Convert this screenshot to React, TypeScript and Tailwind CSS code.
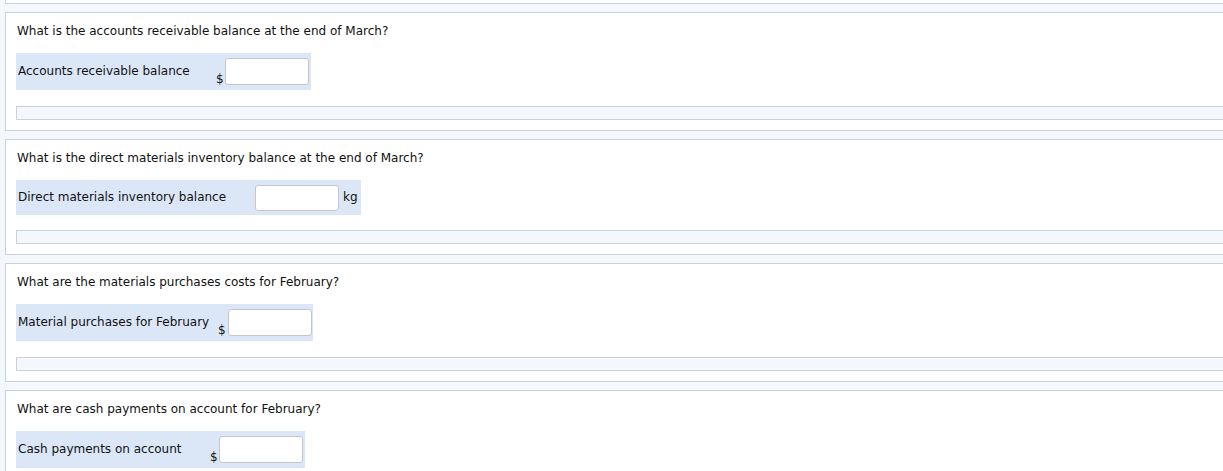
import React from "react";

type Row = {
  question: string;
  label: string;
  labelClass: string;
  prefix?: string;
  prefixClass?: string;
  unit?: string;
  boxClass: string;
  inputClass: string;
  barClass: string;
};

const rows: Row[] = [
  {
    question: "What is the accounts receivable balance at the end of March?",
    label: "Accounts receivable balance",
    labelClass: "w-[198px]",
    prefix: "$",
    prefixClass: "w-[9px]",
    boxClass: "h-[37px] pr-[2px]",
    inputClass: "h-[27px]",
    barClass: "mt-[16px]",
  },
  {
    question: "What is the direct materials inventory balance at the end of March?",
    label: "Direct materials inventory balance",
    labelClass: "w-[237px]",
    unit: "kg",
    boxClass: "h-[35px] pr-[3px]",
    inputClass: "h-[26px]",
    barClass: "mt-[15px]",
  },
  {
    question: "What are the materials purchases costs for February?",
    label: "Material purchases for February",
    labelClass: "w-[200px]",
    prefix: "$",
    prefixClass: "w-[10px]",
    boxClass: "h-[37px] pr-[1px]",
    inputClass: "h-[27px]",
    barClass: "mt-[16px]",
  },
  {
    question: "What are cash payments on account for February?",
    label: "Cash payments on account",
    labelClass: "w-[192px]",
    prefix: "$",
    prefixClass: "w-[9px]",
    boxClass: "h-[37px] pr-[2px]",
    inputClass: "h-[27px]",
    barClass: "mt-[16px]",
  },
];

function QuestionCard({ row }: { row: Row }) {
  return (
    <div className="bg-white border border-r-0 border-[#c8d2de] px-[10px] pt-[11px] pb-[10px]">
      <p className="pl-[1px] leading-[14px]">{row.question}</p>
      <div className={`mt-[15px] flex w-fit items-center bg-[#dbe7f7] pl-[2px] ${row.boxClass}`}>
        <span className={`mb-[2px] flex-none leading-[14px] ${row.labelClass}`}>{row.label}</span>
        <div className="flex items-end">
          {row.prefix && (
            <span className={`flex-none leading-[14px] -mb-[1px] ${row.prefixClass}`}>{row.prefix}</span>
          )}
          <input
            type="text"
            className={`w-[84px] rounded-[3px] border border-[#c6c6c6] bg-white outline-none ${row.inputClass}`}
          />
        </div>
        {row.unit && <span className="mb-[1px] ml-[4px] leading-[14px]">{row.unit}</span>}
      </div>
      <div className={`-mr-[10px] h-[14px] border border-r-0 border-[#c8d2de] bg-[#f4f7fb] ${row.barClass}`} />
    </div>
  );
}

export default function App() {
  return (
    <div className="min-h-screen overflow-hidden bg-[#f4f7fb] pl-[5px] text-[12px] text-[#111] font-['DejaVu_Sans',Verdana,sans-serif]">
      <div className="flex flex-col gap-[8px]">
        {/* tail of the previous question */}
        <div className="h-[4px] bg-white border-l border-b border-[#c8d2de]" />
        {rows.map((row) => (
          <QuestionCard key={row.label} row={row} />
        ))}
      </div>
    </div>
  );
}
